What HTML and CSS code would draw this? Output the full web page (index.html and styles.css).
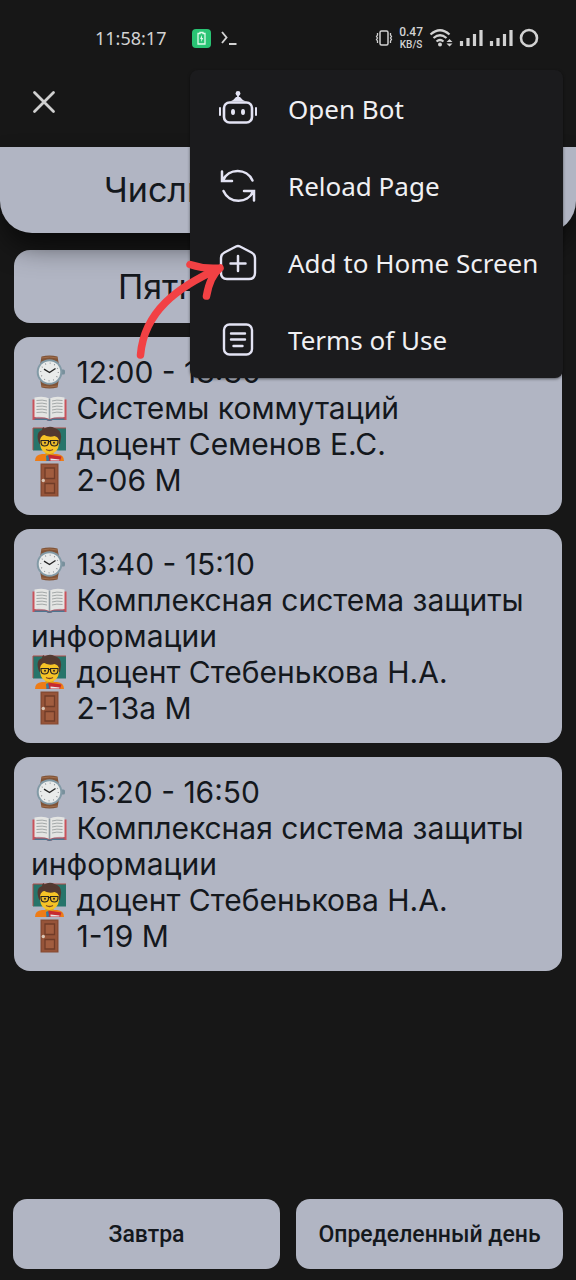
FILE: index.html
```html
<!DOCTYPE html>
<html lang="ru">
<head>
<meta charset="utf-8">
<meta name="viewport" content="width=device-width, initial-scale=1">
<title>Расписание</title>
<link rel="stylesheet" href="styles.css">
</head>
<body>
<svg class="sprite" aria-hidden="true">
  <symbol id="watch" viewBox="0 0 36 36">
    <path d="M10 2.500Q18 .5 26 2.500L27.500 11H8.500ZM8.500 25h19L26 33.500Q18 35.500 10 33.500Z" fill="#805438"/>
    <path d="M10 4Q18 2 26 4M10 32Q18 34 26 32" fill="none" stroke="#a16e4b"/>
    <rect x="29" y="15.500" width="4.500" height="5" rx="1.500" fill="#78909c"/>
    <circle cx="18" cy="18" r="12.800" fill="#829aa6"/>
    <circle cx="18" cy="18" r="10.800" fill="#e9ebeb"/>
    <circle cx="18" cy="18" r="8.800" fill="none" stroke="#777c80" stroke-width="1.200" stroke-dasharray=".8 3.808"/>
    <path d="M12.500 15.200 18 18.500 24 14.500" fill="none" stroke="#222" stroke-width="1.400"/>
  </symbol>
  <symbol id="book" viewBox="0 0 36 36">
    <path d="M1 9.500h3v18h12l2 1 2-1h12v-18h3V30H21q-3 2-6 0H1Z" fill="#c9525b"/>
    <path d="M3 28.500h12q3 2 6 0h12V30H21q-3 2-6 0H3Z" fill="#4d7590"/>
    <path d="M3 7.500q9-2 15 1 6-3 15-1V27q-9-1-15 2-6-3-15-2Z" fill="#e4e5e3"/>
    <path d="M18 8.500V29" stroke="#8f9ca4" stroke-width="1.600"/>
    <path d="M5 10.500q6-1 10.500.5M5 13.500q6-1 10.500.5M5 16.500q6-1 10.500.5M5 19.500q6-1 10.500.5M5 22.500q6-1 10.500.5M20.500 11q4.500-1.500 10.500-.5M20.500 14q4.500-1.500 10.500-.5M20.500 17q4.500-1.500 10.500-.5M20.500 20q4.500-1.500 10.500-.5M20.500 23q4.500-1.500 10.500-.5" fill="none" stroke="#a3a8a8"/>
  </symbol>
  <symbol id="teacher" viewBox="0 0 36 36">
    <path d="M1.500 2h33v22.500h-33Z" fill="#27746a"/>
    <path d="M1.500 2h33M1.500 2v22" stroke="#ac4d46" stroke-width="1" fill="none"/>
    <path d="M3.500 35q0-6.500 7-7h15q7 .5 7 7Z" fill="#ee7c16"/>
    <path d="M7 16Q4 6 10.500 4q0-2 1.500-3l1 1.500Q18-.5 23 2q7.500 2 6.500 10L28.500 18H8Z" fill="#543930"/>
    <path d="M14 25h8v4l-4 2-4-2Z" fill="#d99717"/>
    <path d="M8.500 14Q9 8 18 8t9.500 6v4q-1 9.500-9.500 10-8.500-.5-9.500-10Z" fill="#f6c326"/>
    <path d="M8 15q0-5 3-7 6 4 12 2 4 1 5 5 1-10-10-11Q8 4 8 15Z" fill="#543930"/>
    <path d="M9.500 14.500h7.500V17q-.5 3-4 3-3 0-3.500-3ZM19 14.500h7.500V17q-.5 3-3.500 3-3.500 0-4-3Z" fill="#e8b82a" stroke="#282421" stroke-width="1.200"/>
    <path d="M17 15.500h2" stroke="#282421"/>
    <circle cx="13.500" cy="16.700" r="1" fill="#312823"/><circle cx="22.500" cy="16.700" r="1" fill="#312823"/>
    <path d="M14.500 23.500q3.500 2 7 0" fill="none" stroke="#7b4828" stroke-width="1.300"/>
    <path d="m17 28.500 13 2-1.500 4.500H15Z" fill="#c62b32"/>
    <path d="m14.500 30 2-1 1.500 5.500-3 .5Z" fill="#357b9b"/><path d="m19 32.500 9 1v1h-9Z" fill="#e7e7e7"/>
  </symbol>
  <symbol id="door" viewBox="0 0 36 36">
    <path d="M9 1.500h18v33H9Z" fill="#874b32"/>
    <path d="M10.500 3h15v30.500h-15Z" fill="#965439"/>
    <path d="M13.500 6h9.500v10.500h-9.500ZM13.500 21.500h9.500v9.500h-9.500Z" fill="#a15d3f" stroke="#703c28" stroke-width="1.300"/>
    <circle cx="11.800" cy="18.500" r="1.700" fill="#dac6b6"/>
  </symbol>
  <symbol id="signal" viewBox="0 0 24 20">
    <path d="M2.500 13v5M9 10v8M15.500 6v12M22 2v16" stroke="currentColor" stroke-width="3.200"/>
  </symbol>
</svg>

<div class="statusbar">
  <time class="clock">11:58:17</time>
  <svg class="battery-app" viewBox="0 0 19 19"><rect width="19" height="19" rx="4" fill="#29c474"/><path d="M8 4.500V3.500h3v1h2v10.500H6V4.500Z" fill="none" stroke="#ddfbea" stroke-width="1.300"/><path d="m10 6-2 4h1.300L9 13l2.300-4H10Z" fill="#ddfbea"/></svg>
  <svg class="terminal" viewBox="0 0 18 16"><path d="m2 2 4.500 5.500L2 13M9 14h7.500" fill="none" stroke="currentColor" stroke-width="1.900"/></svg>
  <div class="indicators">
    <svg class="vibrate" viewBox="0 0 18 16"><rect x="5" y="1" width="8" height="14" rx="1.500" fill="none" stroke="currentColor" stroke-width="1.500"/><path d="M2.500 3v2l-1 1.500 1 1.500-1 1.500 1 1.500v2M15.500 3v2l1 1.500-1 1.500 1 1.500-1 1.500v2" fill="none" stroke="currentColor" stroke-width="1.300"/></svg>
    <div class="speed"><span class="rate">0.47</span><span class="unit">KB/S</span></div>
    <svg class="wifi" viewBox="0 0 24 20"><path d="M1.500 6.500q9.500-8.500 19 0M4.500 10q6.500-5.500 13 0M7.500 13.500q3.500-3 7 0" fill="none" stroke="currentColor" stroke-width="2.200"/><circle cx="11" cy="16.500" r="2" fill="currentColor"/><path d="m17.500 14 3-3 3 3ZM17.500 15.500l3 3 3-3Z" fill="currentColor"/></svg>
    <svg class="signal"><use href="#signal"/></svg>
    <svg class="signal"><use href="#signal"/></svg>
    <svg class="ring" viewBox="0 0 20 20"><circle cx="10" cy="10" r="8" fill="none" stroke="currentColor" stroke-width="2.600"/></svg>
  </div>
</div>

<header class="appbar">
  <button class="close" type="button" aria-label="Close"><svg viewBox="0 0 24 24"><path d="m2.500 2.500 19 19m0-19-19 19" stroke="currentColor" stroke-width="2.800" stroke-linecap="round"/></svg></button>
</header>

<div class="overlay">
  <nav class="menu">
    <button class="item" type="button"><svg class="glyph" viewBox="0 0 40 40"><rect x="6" y="13.500" width="28" height="20" rx="5.500" fill="none" stroke="currentColor" stroke-width="2.600"/><path d="M12 12.500q4-1.500 6-4.500h4q2 3 6 4.500Z" fill="currentColor"/><circle cx="20" cy="4.500" r="2.400" fill="currentColor"/><path d="M20 5v5" stroke="currentColor" stroke-width="1.800"/><path d="M2 19v7M38 19v7" stroke="currentColor" stroke-width="2" stroke-linecap="round"/><ellipse cx="15" cy="23" rx="2" ry="3" fill="currentColor"/><ellipse cx="25" cy="23" rx="2" ry="3" fill="currentColor"/></svg>Open Bot</button>
    <button class="item" type="button"><svg class="glyph" viewBox="0 0 40 40"><path d="M4 5.500v9.500h10M5 14.500C10 2 29 1.500 34.500 14.500M36 34.500V25H26M35 25.500C30 38 11 38 5.500 25" fill="none" stroke="currentColor" stroke-width="2.500" stroke-linecap="round" stroke-linejoin="miter"/></svg>Reload Page</button>
    <button class="item" type="button"><svg class="glyph" viewBox="0 0 40 40"><path d="M18 3.500q2-1 4 0L33.500 9.500q3.500 2 3.500 5.500V30q0 6-6 6H9q-6 0-6-6V15q0-3.500 3.500-5.500Z" fill="none" stroke="currentColor" stroke-width="2.400"/><path d="M20 13v15M12.500 20.500h15" stroke="currentColor" stroke-width="2.500" stroke-linecap="round"/></svg>Add to Home Screen</button>
    <button class="item" type="button"><svg class="glyph" viewBox="0 0 40 40"><rect x="6" y="4.500" width="28" height="30" rx="5.500" fill="none" stroke="currentColor" stroke-width="2.400"/><path d="M13 13.500h14M13 19.500h14M15.500 26h9" stroke="currentColor" stroke-width="2.400" stroke-linecap="round"/></svg>Terms of Use</button>
  </nav>
  <svg class="pointer" viewBox="0 0 90 100" aria-hidden="true"><path d="M6.500 95C10 52 43 27 86 8M56 4.500Q71 9.500 86 8 76 16 72.500 36" fill="none" stroke="#f24144" stroke-width="7.500" stroke-linecap="round" stroke-linejoin="round"/></svg>
</div>

<main class="schedule">
  <h1 class="week">Числитель</h1>
  <div class="list">
    <h2 class="day">Пятница</h2>
    <article class="card">
      <p><svg class="emoji"><use href="#watch"/></svg> 12:00 - 13:30</p>
      <p><svg class="emoji"><use href="#book"/></svg> Системы коммутаций</p>
      <p><svg class="emoji"><use href="#teacher"/></svg> доцент Семенов Е.С.</p>
      <p><svg class="emoji"><use href="#door"/></svg> 2-06 М</p>
    </article>
    <article class="card">
      <p><svg class="emoji"><use href="#watch"/></svg> 13:40 - 15:10</p>
      <p><svg class="emoji"><use href="#book"/></svg> Комплексная система защиты информации</p>
      <p><svg class="emoji"><use href="#teacher"/></svg> доцент Стебенькова Н.А.</p>
      <p><svg class="emoji"><use href="#door"/></svg> 2-13а М</p>
    </article>
    <article class="card">
      <p><svg class="emoji"><use href="#watch"/></svg> 15:20 - 16:50</p>
      <p><svg class="emoji"><use href="#book"/></svg> Комплексная система защиты информации</p>
      <p><svg class="emoji"><use href="#teacher"/></svg> доцент Стебенькова Н.А.</p>
      <p><svg class="emoji"><use href="#door"/></svg> 1-19 М</p>
    </article>
  </div>
</main>

<footer class="actions">
  <button class="action" type="button">Завтра</button>
  <button class="action" type="button">Определенный день</button>
</footer>
</body>
</html>
```
FILE: styles.css
```css
* {
  box-sizing: border-box;
}

body {
  display: flex;
  flex-direction: column;
  position: relative;
  min-height: 100vh;
  margin: 0;
  background: #171717;
  color: #14181d;
  font-family: Inter, "Liberation Sans", sans-serif;
}

button {
  border: 0;
  font-family: inherit;
}

svg {
  display: block;
  flex: none;
}

.sprite {
  position: absolute;
  width: 0;
  height: 0;
}

.statusbar {
  display: flex;
  align-items: center;
  height: 76px;
  padding: 0 37px 0 95px;
  color: #d2d2d2;
}

.clock {
  font-family: "Noto Sans", sans-serif;
  font-size: 18px;
  min-width: 97px;
}

.battery-app {
  width: 19px;
  height: 19px;
}

.terminal {
  width: 18px;
  height: 16px;
  margin-left: 9px;
}

.indicators {
  display: flex;
  align-items: center;
  gap: 6px;
  margin-left: auto;
}

.vibrate {
  width: 18px;
  height: 16px;
}

.speed {
  display: flex;
  flex-direction: column;
  align-items: center;
  font-family: Roboto, sans-serif;
  font-weight: 500;
}

.rate {
  font-size: 12px;
  line-height: 14px;
}

.unit {
  font-size: 10px;
  line-height: 12px;
}

.wifi,
.signal {
  width: 24px;
  height: 20px;
}

.ring {
  width: 20px;
  height: 20px;
}

.appbar {
  display: flex;
  align-items: center;
  height: 52px;
  margin-bottom: 19px;
  padding: 0 32px;
}

.close {
  padding: 0;
  background: none;
  color: #d0d0d0;
}

.close svg {
  width: 24px;
  height: 24px;
}

.overlay {
  position: absolute;
  top: 70px;
  right: 13px;
  z-index: 3;
}

.menu {
  width: 373px;
  border-radius: 8px;
  background: #1b1b1d;
  box-shadow: 0 1px 3px rgba(0, 0, 0, 0.5);
}

.item {
  display: flex;
  align-items: center;
  gap: 30px;
  width: 100%;
  height: 77px;
  padding: 0 28px;
  background: none;
  color: #f0f0f3;
  font-family: "Noto Sans", sans-serif;
  font-size: 26px;
  white-space: nowrap;
}

.glyph {
  width: 40px;
  height: 40px;
  color: #e3e3f3;
}

.pointer {
  position: absolute;
  top: 190px;
  left: -56px;
  width: 90px;
  height: 100px;
}

.schedule {
  flex: 1;
}

.week,
.day {
  margin: 0;
  background: #b1b5c3;
  font-size: 34px;
  font-weight: 400;
  padding-left: 104px;
}

.week {
  position: relative;
  z-index: 1;
  border-radius: 0 0 32px 32px;
  box-shadow: 0 16px 30px -6px rgba(0, 0, 0, 0.7);
  line-height: 86px;
}

.list {
  display: flex;
  flex-direction: column;
  gap: 14px;
  padding: 17px 14px;
}

.day {
  border-radius: 16px;
  line-height: 73px;
}

.card {
  padding: 17px;
  border-radius: 16px;
  background: #b1b5c3;
  font-size: 30px;
  line-height: 36px;
}

.card p {
  margin: 0;
}

.emoji {
  display: inline-block;
  width: 37px;
  height: 36px;
  vertical-align: top;
}

.actions {
  display: grid;
  grid-template-columns: 1fr 1fr;
  gap: 16px;
  padding: 0 13px 11px;
}

.action {
  height: 70px;
  padding: 0;
  border-radius: 14px;
  background: #b1b5c3;
  color: #14181d;
  font-family: Roboto, sans-serif;
  font-size: 23px;
  font-weight: 500;
}
```
